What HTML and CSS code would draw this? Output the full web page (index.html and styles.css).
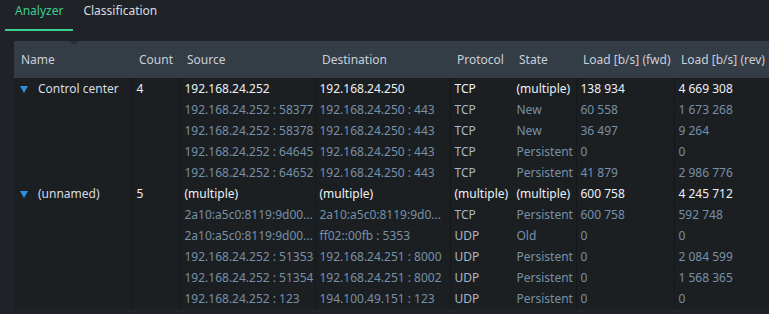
FILE: index.html
```html
<!DOCTYPE html>
<html>
  <head>
    <meta http-equiv="Content-type" content="text/html; charset=utf-8" />
    <title>Analyzer</title>
    <link rel="stylesheet" href="styles.css">
  </head>
  <body>
    <div class="tabs">
      <div class="tab active">Analyzer</div>
      <div class="tab">Classification</div>
    </div>
    <div class="grid">
      <span class="sortmark"></span>
      <table class="flows">
        <colgroup>
          <col class="c-name"><col class="c-count"><col class="c-src"><col class="c-dst">
          <col class="c-proto"><col class="c-state"><col class="c-fwd"><col class="c-rev">
        </colgroup>
        <thead>
          <tr>
            <th>Name</th><th>Count</th><th>Source</th><th>Destination</th>
            <th>Protocol</th><th>State</th><th>Load [b/s] (fwd)</th><th>Load [b/s] (rev)</th>
          </tr>
        </thead>
        <tbody>
          <tr class="group">
            <td class="name"><span class="caret"></span>Control center</td><td>4</td>
            <td>192.168.24.252</td><td>192.168.24.250</td><td>TCP</td><td>(multiple)</td><td>138 934</td><td>4 669 308</td>
          </tr>
          <tr class="child">
            <td></td><td></td><td>192.168.24.252 : 58377</td><td>192.168.24.250 : 443</td><td class="proto">TCP</td><td>New</td><td>60 558</td><td>1 673 268</td>
          </tr>
          <tr class="child">
            <td></td><td></td><td>192.168.24.252 : 58378</td><td>192.168.24.250 : 443</td><td class="proto">TCP</td><td>New</td><td>36 497</td><td>9 264</td>
          </tr>
          <tr class="child">
            <td></td><td></td><td>192.168.24.252 : 64645</td><td>192.168.24.250 : 443</td><td class="proto">TCP</td><td>Persistent</td><td>0</td><td>0</td>
          </tr>
          <tr class="child">
            <td></td><td></td><td>192.168.24.252 : 64652</td><td>192.168.24.250 : 443</td><td class="proto">TCP</td><td>Persistent</td><td>41 879</td><td>2 986 776</td>
          </tr>
          <tr class="group">
            <td class="name"><span class="caret"></span>(unnamed)</td><td>5</td>
            <td>(multiple)</td><td>(multiple)</td><td>(multiple)</td><td>(multiple)</td><td>600 758</td><td>4 245 712</td>
          </tr>
          <tr class="child">
            <td></td><td></td><td>2a10:a5c0:8119:9d00...</td><td>2a10:a5c0:8119:9d0...</td><td class="proto">TCP</td><td>Persistent</td><td>600 758</td><td>592 748</td>
          </tr>
          <tr class="child">
            <td></td><td></td><td>2a10:a5c0:8119:9d00...</td><td>ff02::00fb : 5353</td><td class="proto">UDP</td><td>Old</td><td>0</td><td>0</td>
          </tr>
          <tr class="child">
            <td></td><td></td><td>192.168.24.252 : 51353</td><td>192.168.24.251 : 8000</td><td class="proto">UDP</td><td>Persistent</td><td>0</td><td>2 084 599</td>
          </tr>
          <tr class="child">
            <td></td><td></td><td>192.168.24.252 : 51354</td><td>192.168.24.251 : 8002</td><td class="proto">UDP</td><td>Persistent</td><td>0</td><td>1 568 365</td>
          </tr>
          <tr class="child">
            <td></td><td></td><td>192.168.24.252 : 123</td><td>194.100.49.151 : 123</td><td class="proto">UDP</td><td>Persistent</td><td>0</td><td>0</td>
          </tr>
        </tbody>
      </table>
    </div>
  </body>
</html>
```

FILE: styles.css
```css
/* base */
html,body{margin:0;padding:0;height:100%;}
body{background:#1f2327;font-family:"Noto Sans","Open Sans",sans-serif;font-size:12px;color:#d6dce2;overflow:hidden;}

/* tabs */
.tabs{display:flex;height:31px;padding-left:5px;}
.tab{padding:3px 10px 0 10px;height:26px;line-height:16px;color:#d8dde3;border-bottom:2px solid transparent;}
.tab.active{color:#3ecf8e;border-bottom-color:#3ecf8e;}

/* grid */
.grid{position:relative;margin:10px 0 0 14px;}
.sortmark{position:absolute;left:56px;top:0;width:0;height:0;border-left:4px solid transparent;border-right:4px solid transparent;border-top:4px solid #262b31;}
.flows{width:755px;table-layout:fixed;border-collapse:collapse;background:#1b1f22;}
.c-name{width:118px}
.c-count{width:48px}
.c-src{width:135px}
.c-dst{width:135px}
.c-proto{width:62px}
.c-state{width:64px}
.c-fwd{width:98px}
.c-rev{width:95px}

.flows th{height:37px;padding:0 0 0 7px;background:#343c46;color:#c9d0d8;font-weight:normal;text-align:left;white-space:nowrap;overflow:hidden;}
.flows td{height:21px;padding:0 0 0 4px;white-space:nowrap;overflow:hidden;border-left:1px solid #16191c;line-height:21px;}
.flows td:first-child{border-left:0;}
.flows td:nth-child(6){border-left-color:#1b1f22;}

.group td{color:#eef1f4;}
.group td.name{padding-left:6px;color:#d6dce2;}
.child td{color:#7890a7;}
.child td.proto{color:#a9b7c5;}

.caret{display:inline-block;width:0;height:0;margin:0 10px 1px 0;border-left:4px solid transparent;border-right:4px solid transparent;border-top:7px solid #2f8fe3;vertical-align:middle;}
```
